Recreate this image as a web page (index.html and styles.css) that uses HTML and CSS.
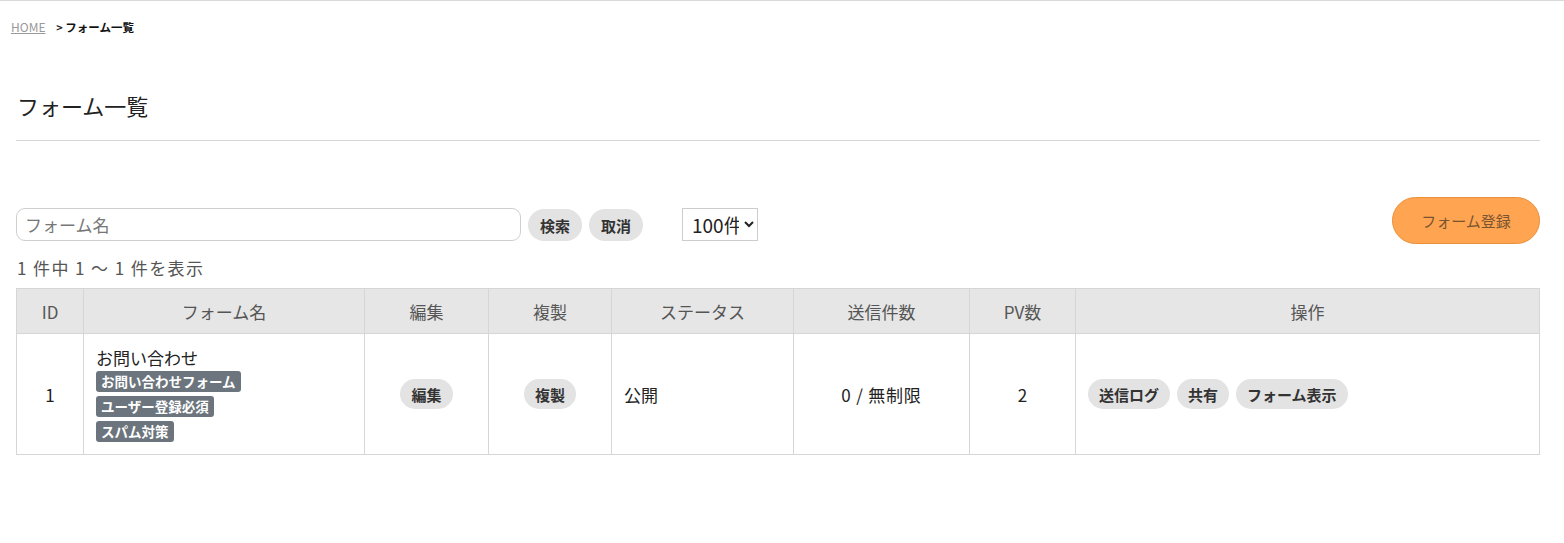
FILE: index.html
```html
<!DOCTYPE html>
<html lang="ja">
<head>
    <meta charset="UTF-8">
    <meta name="viewport" content="width=device-width, initial-scale=1.0">
    <title>フォーム一覧</title>
    <link rel="stylesheet" href="styles.css">
</head>
<body>
    <!-- パンくず -->
    <div class="breadcrumb">
        <a href="#">HOME</a>
        <span class="sep">&gt;</span>
        <span class="current">フォーム一覧</span>
    </div>

    <div class="content">
        <h1 class="page-title">フォーム一覧</h1>

        <div class="toolbar">
            <form class="search">
                <input type="text" class="search-input" placeholder="フォーム名">
                <button type="button" class="pill">検索</button>
                <button type="button" class="pill">取消</button>
                <select class="per-page">
                    <option>100件</option>
                </select>
            </form>
            <button type="button" class="btn-new">フォーム登録</button>
        </div>

        <p class="count">1 件中 1 ～ 1 件を表示</p>

        <table class="list">
            <thead>
                <tr>
                    <th class="c-id">ID</th>
                    <th class="c-name">フォーム名</th>
                    <th class="c-edit">編集</th>
                    <th class="c-copy">複製</th>
                    <th class="c-status">ステータス</th>
                    <th class="c-sent">送信件数</th>
                    <th class="c-pv">PV数</th>
                    <th>操作</th>
                </tr>
            </thead>
            <tbody>
                <tr>
                    <td class="center">1</td>
                    <td class="name">
                        <div class="form-name">お問い合わせ</div>
                        <div class="tags">
                            <span class="tag">お問い合わせフォーム</span>
                            <span class="tag">ユーザー登録必須</span>
                            <span class="tag">スパム対策</span>
                        </div>
                    </td>
                    <td class="center"><button class="pill">編集</button></td>
                    <td class="center"><button class="pill">複製</button></td>
                    <td>公開</td>
                    <td class="center sent">0 / 無制限</td>
                    <td class="center">2</td>
                    <td>
                        <div class="actions">
                            <button class="pill">送信ログ</button>
                            <button class="pill">共有</button>
                            <button class="pill">フォーム表示</button>
                        </div>
                    </td>
                </tr>
            </tbody>
        </table>
    </div>
</body>
</html>
```

FILE: styles.css
```css
body {
    margin: 0;
    padding: 0;
    border-top: 1px solid #d9d9d9;
    background-color: #fff;
    color: #222;
    font-family: "Noto Sans CJK JP", "Noto Sans", sans-serif;
    font-size: 17px;
}

/* パンくず */
.breadcrumb {
    padding: 17px 11px 0;
    height: 18px;
    font-size: 12px;
    line-height: 18px;
}
.breadcrumb a {
    color: #999;
    text-decoration: underline;
}
.breadcrumb .sep {
    margin-left: 8px;
    font-weight: bold;
    font-size: 11px;
}
.breadcrumb .current {
    font-weight: bold;
    font-size: 11.5px;
    color: #111;
}

.content {
    padding: 0 24px 0 16px;
}

.page-title {
    margin: 0;
    padding: 54px 0 20px 1px;
    font-size: 22px;
    font-weight: normal;
    line-height: 30px;
    color: #222;
    border-bottom: 1px solid #d6d6d6;
}

/* 検索バー */
.toolbar {
    display: flex;
    justify-content: space-between;
    align-items: flex-start;
    margin-top: 56px;
}
.search {
    display: flex;
    align-items: center;
    gap: 7px;
    margin-top: 10px;
}
.search-input {
    width: 505px;
    height: 33px;
    box-sizing: border-box;
    border: 1px solid #cfcfcf;
    border-radius: 9px;
    padding: 0 8px;
    font-family: inherit;
    font-size: 17px;
    color: #222;
}
.search-input::placeholder {
    color: #777;
}
.pill {
    border: none;
    background-color: #e3e3e3;
    color: #333;
    border-radius: 16px;
    padding: 0 11px;
    height: 30px;
    font-family: inherit;
    font-size: 15px;
    font-weight: bold;
    cursor: pointer;
}
.search .pill {
    height: 32px;
    padding: 0 12px;
    margin-top: 2px;
}
.per-page {
    margin-left: 32px;
    width: 76px;
    height: 33px;
    border: 1px solid #ccc;
    border-radius: 0;
    background-color: #fff;
    font-family: inherit;
    font-size: 19px;
    color: #222;
    padding: 0 2px 0 5px;
}
.btn-new {
    width: 148px;
    height: 47px;
    border: 1px solid #e8913a;
    border-radius: 24px;
    background-color: #ffa451;
    color: #7a5430;
    font-family: inherit;
    font-size: 15px;
    cursor: pointer;
}

.count {
    margin: 12px 0 8px 1px;
    font-size: 17px;
    letter-spacing: 1.4px;
    line-height: 24px;
    color: #555;
}

/* 一覧 */
.list {
    width: 100%;
    table-layout: fixed;
    border-collapse: collapse;
    border: 1px solid #d6d6d6;
}
.list th {
    height: 44px;
    padding: 0;
    background-color: #e6e6e6;
    color: #555;
    font-weight: normal;
    font-size: 17px;
    border: 1px solid #d6d6d6;
}
.list td {
    height: 120px;
    border: 1px solid #d6d6d6;
    padding: 0 12px;
    font-size: 17px;
    color: #222;
}
.list td.center {
    text-align: center;
}
.list td.sent {
    letter-spacing: 0.8px;
}
.c-id { width: 66px; }
.c-name { width: 280px; }
.c-edit { width: 123px; }
.c-copy { width: 122px; }
.c-status { width: 181px; }
.c-sent { width: 175px; }
.c-pv { width: 105px; }

.form-name {
    line-height: 24px;
}
.tags {
    display: flex;
    flex-direction: column;
    align-items: flex-start;
    gap: 4px;
    margin-top: 1px;
}
.tag {
    background-color: #6c757d;
    color: #fff;
    font-size: 13.5px;
    font-weight: bold;
    line-height: 21px;
    padding: 0 5px;
    border-radius: 3px;
}
.actions {
    display: flex;
    gap: 7px;
}
```
